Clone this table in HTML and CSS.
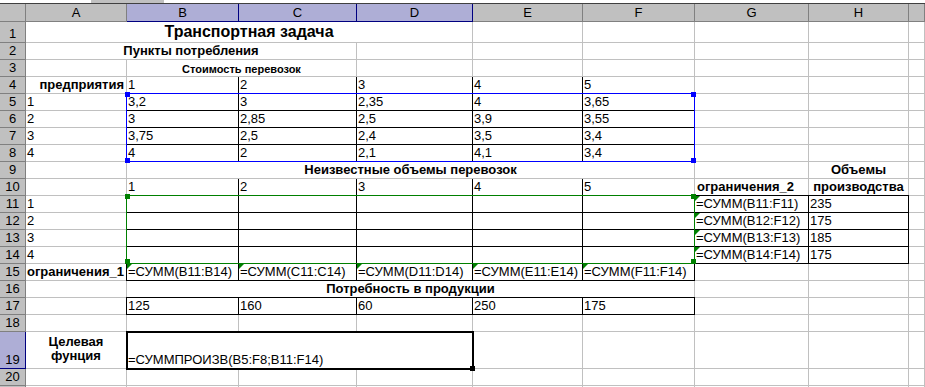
FILE: index.html
```
<!DOCTYPE html>
<html lang="ru">
<head>
<meta charset="utf-8">
<title>Транспортная задача</title>
<link rel="stylesheet" href="styles.css">
</head>
<body>
<div class="topbar"><div class="tb-white"></div><div class="tb-gray"></div></div>
<div class="sheet">
  <!-- column headers -->
  <div class="c ch"></div>
  <div class="c ch">A</div>
  <div class="c ch sel">B</div>
  <div class="c ch sel">C</div>
  <div class="c ch sel">D</div>
  <div class="c ch">E</div>
  <div class="c ch">F</div>
  <div class="c ch">G</div>
  <div class="c ch">H</div>
  <div class="c ch"></div>

  <!-- row 1 -->
  <div class="c rh">1</div>
  <div class="c s4 ctr b title">Транспортная задача</div>
  <div class="c"></div><div class="c"></div><div class="c"></div><div class="c"></div><div class="c"></div>

  <!-- row 2 -->
  <div class="c rh">2</div>
  <div class="c s3 ctr b">Пункты потребления</div>
  <div class="c"></div><div class="c"></div><div class="c"></div><div class="c"></div><div class="c"></div><div class="c"></div>

  <!-- row 3 -->
  <div class="c rh">3</div>
  <div class="c"></div>
  <div class="c s2 ctr b small">Стоимость перевозок</div>
  <div class="c"></div><div class="c"></div><div class="c"></div><div class="c"></div><div class="c"></div><div class="c"></div>

  <!-- row 4 -->
  <div class="c rh">4</div>
  <div class="c rt b">предприятия</div>
  <div class="c br">1</div>
  <div class="c br">2</div>
  <div class="c br">3</div>
  <div class="c br">4</div>
  <div class="c">5</div>
  <div class="c"></div><div class="c"></div><div class="c"></div>

  <!-- row 5 -->
  <div class="c rh">5</div>
  <div class="c">1</div>
  <div class="c bd">3,2</div>
  <div class="c bd">3</div>
  <div class="c bd">2,35</div>
  <div class="c bd">4</div>
  <div class="c bd">3,65</div>
  <div class="c"></div><div class="c"></div><div class="c"></div>

  <!-- row 6 -->
  <div class="c rh">6</div>
  <div class="c">2</div>
  <div class="c bd">3</div>
  <div class="c bd">2,85</div>
  <div class="c bd">2,5</div>
  <div class="c bd">3,9</div>
  <div class="c bd">3,55</div>
  <div class="c"></div><div class="c"></div><div class="c"></div>

  <!-- row 7 -->
  <div class="c rh">7</div>
  <div class="c">3</div>
  <div class="c bd">3,75</div>
  <div class="c bd">2,5</div>
  <div class="c bd">2,4</div>
  <div class="c bd">3,5</div>
  <div class="c bd">3,4</div>
  <div class="c"></div><div class="c"></div><div class="c"></div>

  <!-- row 8 -->
  <div class="c rh">8</div>
  <div class="c">4</div>
  <div class="c bd">4</div>
  <div class="c bd">2</div>
  <div class="c bd">2,1</div>
  <div class="c bd">4,1</div>
  <div class="c bd">3,4</div>
  <div class="c"></div><div class="c"></div><div class="c"></div>

  <!-- row 9 -->
  <div class="c rh">9</div>
  <div class="c"></div>
  <div class="c s5 ctr b">Неизвестные объемы перевозок</div>
  <div class="c"></div>
  <div class="c ctr b">Объемы</div>
  <div class="c"></div>

  <!-- row 10 -->
  <div class="c rh">10</div>
  <div class="c"></div>
  <div class="c br">1</div>
  <div class="c br">2</div>
  <div class="c br">3</div>
  <div class="c br">4</div>
  <div class="c">5</div>
  <div class="c b lbold">ограничения_2</div>
  <div class="c ctr b">производства</div>
  <div class="c"></div>

  <!-- row 11 -->
  <div class="c rh">11</div>
  <div class="c">1</div>
  <div class="c bd"></div><div class="c bd"></div><div class="c bd"></div><div class="c bd"></div><div class="c bd"></div>
  <div class="c bd err">=СУММ(B11:F11)</div>
  <div class="c bd">235</div>
  <div class="c"></div>

  <!-- row 12 -->
  <div class="c rh">12</div>
  <div class="c">2</div>
  <div class="c bd"></div><div class="c bd"></div><div class="c bd"></div><div class="c bd"></div><div class="c bd"></div>
  <div class="c bd err">=СУММ(B12:F12)</div>
  <div class="c bd">175</div>
  <div class="c"></div>

  <!-- row 13 -->
  <div class="c rh">13</div>
  <div class="c">3</div>
  <div class="c bd"></div><div class="c bd"></div><div class="c bd"></div><div class="c bd"></div><div class="c bd"></div>
  <div class="c bd err">=СУММ(B13:F13)</div>
  <div class="c bd">185</div>
  <div class="c"></div>

  <!-- row 14 -->
  <div class="c rh">14</div>
  <div class="c">4</div>
  <div class="c bd"></div><div class="c bd"></div><div class="c bd"></div><div class="c bd"></div><div class="c bd"></div>
  <div class="c bd err">=СУММ(B14:F14)</div>
  <div class="c bd">175</div>
  <div class="c"></div>

  <!-- row 15 -->
  <div class="c rh">15</div>
  <div class="c rt b">ограничения_1</div>
  <div class="c bd err">=СУММ(B11:B14)</div>
  <div class="c bd err">=СУММ(C11:C14)</div>
  <div class="c bd err">=СУММ(D11:D14)</div>
  <div class="c bd err">=СУММ(E11:E14)</div>
  <div class="c bd err">=СУММ(F11:F14)</div>
  <div class="c"></div><div class="c"></div><div class="c"></div>

  <!-- row 16 -->
  <div class="c rh">16</div>
  <div class="c"></div>
  <div class="c s5 ctr b">Потребность в продукции</div>
  <div class="c"></div><div class="c"></div><div class="c"></div>

  <!-- row 17 -->
  <div class="c rh">17</div>
  <div class="c"></div>
  <div class="c bd">125</div>
  <div class="c bd">160</div>
  <div class="c bd">60</div>
  <div class="c bd">250</div>
  <div class="c bd">175</div>
  <div class="c"></div><div class="c"></div><div class="c"></div>

  <!-- row 18 -->
  <div class="c rh">18</div>
  <div class="c"></div><div class="c"></div><div class="c"></div><div class="c"></div><div class="c"></div><div class="c"></div><div class="c"></div><div class="c"></div><div class="c"></div>

  <!-- row 19 -->
  <div class="c rh rsel">19</div>
  <div class="c b wrap">Целевая<br>фунция</div>
  <div class="c s3">=СУММПРОИЗВ(B5:F8;B11:F14)</div>
  <div class="c"></div><div class="c"></div><div class="c"></div><div class="c"></div><div class="c"></div>

  <!-- row 20 -->
  <div class="c rh">20</div>
  <div class="c"></div><div class="c"></div><div class="c"></div><div class="c"></div><div class="c"></div><div class="c"></div><div class="c"></div><div class="c"></div><div class="c"></div>

  <!-- row 21 (only its top edge is visible) -->
  <div class="c rh"></div>
  <div class="c"></div><div class="c"></div><div class="c"></div><div class="c"></div><div class="c"></div><div class="c"></div><div class="c"></div><div class="c"></div><div class="c"></div>

  <!-- overlays: range finder, active cell -->
  <div class="range r-blue"></div>
  <div class="hd hb" style="left:125px;top:88px"></div>
  <div class="hd hb" style="left:691px;top:88px"></div>
  <div class="hd hb" style="left:125px;top:154px"></div>
  <div class="hd hb" style="left:691px;top:154px"></div>
  <div class="range r-green"></div>
  <div class="hd hg" style="left:125px;top:190px"></div>
  <div class="hd hg" style="left:691px;top:190px"></div>
  <div class="hd hg" style="left:125px;top:255px"></div>
  <div class="hd hg" style="left:691px;top:255px"></div>
  <div class="active"></div>
  <div class="fill"></div>
</div>
</body>
</html>
```
FILE: styles.css
```
html, body {
  margin: 0;
  padding: 0;
  overflow: hidden;
  background: #fff;
}
body {
  font-family: "Liberation Sans", Arial, sans-serif;
  color: #000;
}
.topbar {
  height: 3px;
  border-bottom: 1px solid #404040;
  display: flex;
}
.tb-white { width: 91px; }
.tb-gray { width: 73px; background: #c0c0c0; }

.sheet {
  position: relative;
  display: grid;
  grid-template-columns: 26px 101px 112px 118px 116px 110px 112px 114px 100px 16px;
  grid-template-rows: 18px 21px repeat(17, 17px) 37px 17px 17px;
}
.c {
  box-sizing: border-box;
  border-right: 1px solid #c0c0c0;
  border-bottom: 1px solid #c0c0c0;
  display: flex;
  align-items: flex-end;
  padding: 0 1px;
  font-size: 13px;
  line-height: 16px;
  white-space: nowrap;
  position: relative;
  background: #fff;
}
.ch {
  background: #c0c0c0;
  border-color: #808080;
  justify-content: center;
  align-items: center;
  line-height: 17px;
}
.rh {
  background: #c0c0c0;
  border-color: #808080;
  justify-content: center;
}
.sel {
  background: #aeaed6;
  border-right-color: #000080;
  border-bottom-color: #000080;
}
.rsel {
  background: #aeaed6;
  border-right-color: #000080;
  border-bottom-color: #000080;
}
.s2 { grid-column: span 2; }
.s3 { grid-column: span 3; }
.s4 { grid-column: span 4; }
.s5 { grid-column: span 5; }
.b { font-weight: 700; }
.title { font-size: 16px; line-height: 20px; }
.small { font-size: 11px; line-height: 14px; }
.ctr { justify-content: center; }
.rt { justify-content: flex-end; padding-right: 2px; }
.lbold { padding-left: 2px; }
.wrap {
  white-space: normal;
  text-align: center;
  justify-content: center;
  align-items: center;
  line-height: 14px;
  padding-bottom: 3px;
}
.bd {
  border-color: #000;
  box-shadow: 0 -1px 0 #000, -1px 0 0 #000, -1px -1px 0 #000;
}
.br { border-right-color: #000; }
.err::before {
  content: "";
  position: absolute;
  left: 0;
  top: 0;
  width: 0;
  height: 0;
  border-top: 5px solid #008000;
  border-right: 5px solid transparent;
}
.range {
  position: absolute;
  box-sizing: border-box;
  border: 1px solid;
}
.r-blue { left: 126px; top: 89px; width: 569px; height: 69px; border-color: #0000ff; }
.r-green { left: 126px; top: 191px; width: 569px; height: 69px; border-color: #008000; }
.hd { position: absolute; width: 5px; height: 5px; }
.hb { background: #0000ff; }
.hg { background: #008000; }
.active {
  position: absolute;
  box-sizing: border-box;
  left: 126px;
  top: 327px;
  width: 348px;
  height: 39px;
  border: 2px solid #000;
}
.fill {
  position: absolute;
  left: 470px;
  top: 362px;
  width: 5px;
  height: 5px;
  background: #000;
}
```
